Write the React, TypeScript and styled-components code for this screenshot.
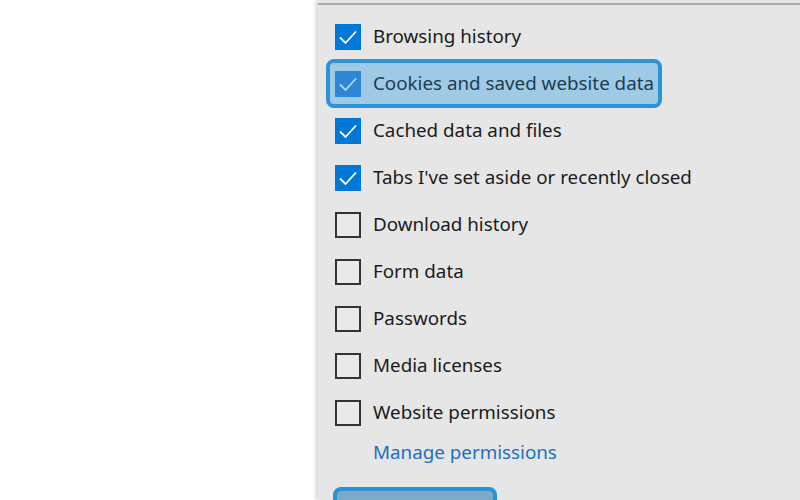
import React from 'react';
import styled, { createGlobalStyle } from 'styled-components';

const GlobalStyle = createGlobalStyle`
  html, body {
    margin:0;
    padding:0;
    background:#fff;
    overflow:hidden;
  }
  body {
    font-family:"Noto Sans", "Open Sans", sans-serif;
  }
`
const Page = styled.div`
  display:flex;
  width:800px;
  height:500px;
`
const Blank = styled.div`
  width:318px;
  flex-shrink:0;
  background:#fff;
`
const Panel = styled.div`
  flex:1;
  height:500px;
  background:#e6e6e6;
  box-shadow:-2px 0 4px rgba(0,0,0,0.18);
  overflow:hidden;
`
const TopLine = styled.div`
  margin-top:3px;
  height:2px;
  background:#a9a9a9;
`
const List = styled.div`
  display:flex;
  flex-direction:column;
  align-items:flex-start;
  padding:8px 0 0 9px;
`
const Row = styled.div<{ $focused?: boolean }>`
  display:flex;
  align-items:center;
  gap:12px;
  height:47px;
  padding:0 7px 0 8px;
  box-sizing:border-box;
  border-radius:7px;
  font-size:18.8px;
  color:${p => p.$focused ? '#1e3b52' : '#1b1b1b'};
  background:${p => p.$focused ? '#9ecae5' : 'transparent'};
  outline:${p => p.$focused ? '4px solid #2b93d6' : 'none'};
  outline-offset:-3px;
`
const Box = styled.div<{ $checked?: boolean; $focused?: boolean }>`
  width:26px;
  height:26px;
  box-sizing:border-box;
  flex-shrink:0;
  display:flex;
  align-items:center;
  justify-content:center;
  background:${p => p.$checked ? (p.$focused ? '#2d87d6' : '#0078d7') : '#e9e9e9'};
  border:${p => p.$checked ? 'none' : '2px solid #333'};
`
const Label = styled.span`
  white-space:nowrap;
  line-height:1;
`
const Link = styled.a`
  display:block;
  margin:4px 0 0 55px;
  font-size:18.8px;
  line-height:24px;
  color:#1b6fc3;
  text-decoration:none;
`
const Button = styled.div`
  margin:23px 0 0 15px;
  width:164px;
  height:40px;
  box-sizing:border-box;
  border:4px solid #2a93d5;
  border-radius:8px;
  background:#7ca9c8;
`

const items = [
  { label: 'Browsing history', checked: true },
  { label: 'Cookies and saved website data', checked: true, focused: true },
  { label: 'Cached data and files', checked: true },
  { label: "Tabs I've set aside or recently closed", checked: true },
  { label: 'Download history', checked: false },
  { label: 'Form data', checked: false },
  { label: 'Passwords', checked: false },
  { label: 'Media licenses', checked: false },
  { label: 'Website permissions', checked: false },
]

const Check = ({ light }: { light?: boolean }) => (
  <svg width="26" height="26" viewBox="0 0 26 26">
    <polyline points="5,13.5 10.5,19 21,7.5" fill="none" stroke={light ? '#b9d8f2' : '#fff'} strokeWidth="1.8" />
  </svg>
)

export default function App() {
  return (
    <Page>
      <GlobalStyle />
      <Blank />
      <Panel>
        <TopLine />
        <List>
          {items.map(item => (
            <Row key={item.label} $focused={item.focused}>
              <Box $checked={item.checked} $focused={item.focused}>
                {item.checked && <Check light={item.focused} />}
              </Box>
              <Label>{item.label}</Label>
            </Row>
          ))}
        </List>
        <Link href="#">Manage permissions</Link>
        <Button />
      </Panel>
    </Page>
  )
}
